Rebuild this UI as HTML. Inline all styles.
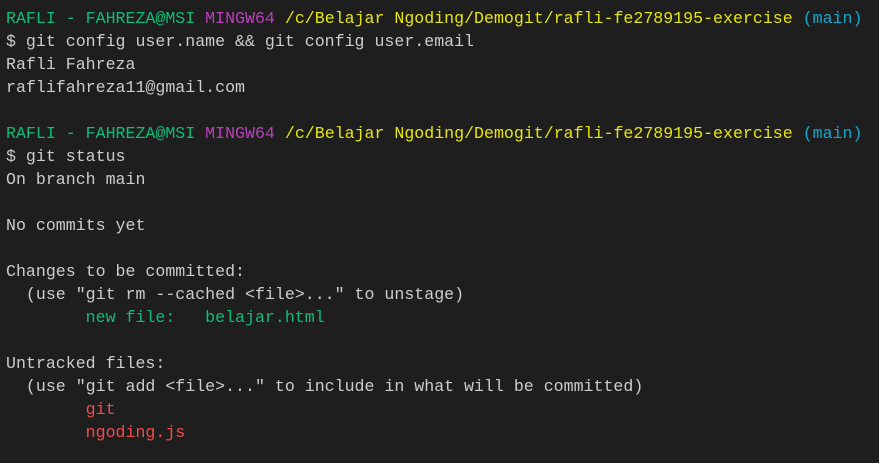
<!DOCTYPE html>
<html><head><style>
html,body{margin:0;padding:0;background:#1e1e1e;width:879px;height:463px;overflow:hidden}
pre{margin:0;padding:7px 0 0 6px;font-family:"Liberation Mono",monospace;font-size:16.6px;line-height:23px;color:#cccccc;white-space:pre}
.g{color:#0dbc79}.m{color:#bc3fbc}.y{color:#e5e510}.c{color:#11a8cd}.r{color:#f14c4c}
</style></head><body><pre><span class="g">RAFLI - FAHREZA@MSI</span> <span class="m">MINGW64</span> <span class="y">/c/Belajar Ngoding/Demogit/rafli-fe2789195-exercise</span> <span class="c">(main)</span>
$ git config user.name &amp;&amp; git config user.email
Rafli Fahreza
raflifahreza11@gmail.com

<span class="g">RAFLI - FAHREZA@MSI</span> <span class="m">MINGW64</span> <span class="y">/c/Belajar Ngoding/Demogit/rafli-fe2789195-exercise</span> <span class="c">(main)</span>
$ git status
On branch main

No commits yet

Changes to be committed:
  (use "git rm --cached &lt;file&gt;..." to unstage)
        <span class="g">new file:   belajar.html</span>

Untracked files:
  (use "git add &lt;file&gt;..." to include in what will be committed)
        <span class="r">git</span>
        <span class="r">ngoding.js</span>
</pre></body></html>
